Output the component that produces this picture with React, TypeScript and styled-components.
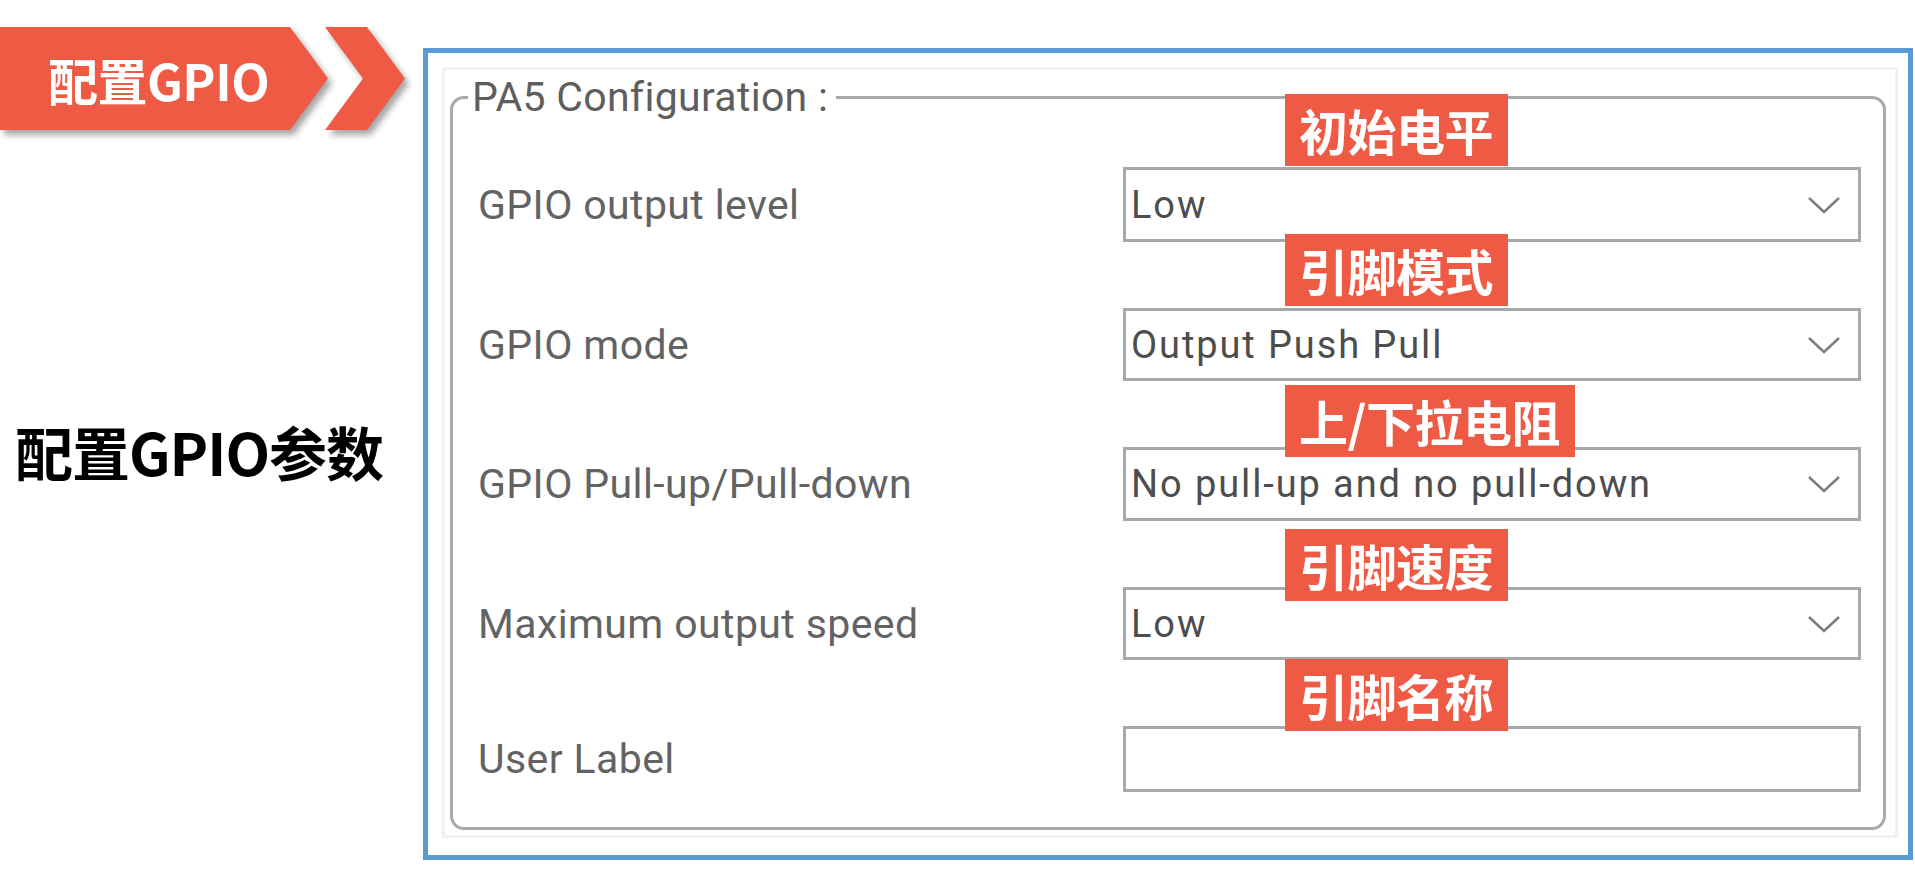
import React from "react";
import styled, { createGlobalStyle } from "styled-components";

const GlobalStyle = createGlobalStyle`
  html, body { margin: 0; padding: 0; background: #ffffff; }
  body { width: 1915px; height: 885px; overflow: hidden; }
`;

const CJK = `"Noto Sans CJK SC", "Noto Sans", sans-serif`;
const UI = `Roboto, "Liberation Sans", sans-serif`;
const RED = "#ee5a44";

const Page = styled.div`
  display: flex;
  width: 1915px;
  height: 885px;
`;

const Side = styled.div`
  width: 423px;
  flex: none;
  display: flex;
  flex-direction: column;
`;

const BannerWrap = styled.div`
  margin-top: 27px;
  height: 103px;
  display: flex;
  filter: drop-shadow(4px 5px 3px rgba(0, 0, 0, 0.35));
`;

const BannerBody = styled.div`
  width: 328px;
  height: 100%;
  box-sizing: border-box;
  padding-left: 48px;
  background: ${RED};
  clip-path: polygon(0 0, 290px 0, 328px 50%, 290px 100%, 0 100%);
  display: flex;
  align-items: center;
  color: #ffffff;
  font-family: ${CJK};
  font-weight: 700;
  font-size: 50px;
  letter-spacing: -0.5px;
`;

const Chevron = styled.div`
  width: 80px;
  height: 100%;
  margin-left: -3px;
  background: ${RED};
  clip-path: polygon(0 0, 42px 0, 80px 50%, 42px 100%, 0 100%, 38px 50%);
`;

const Title = styled.div`
  margin-top: 292px;
  padding-left: 15px;
  font-family: ${CJK};
  font-weight: 700;
  font-size: 58px;
  line-height: 1;
  color: #000000;
  letter-spacing: -1px;
`;

const Frame = styled.div`
  margin-top: 48px;
  width: 1490px;
  height: 812px;
  box-sizing: border-box;
  border: 5px solid #5b9bd5;
  padding: 14px 10px 17px 14px;
`;

const Panel = styled.div`
  height: 100%;
  box-sizing: border-box;
  border: 3px solid #f0f1f2;
  padding: 3px 9px 5px 5px;
`;

const FieldSet = styled.fieldset`
  margin: 0;
  height: 100%;
  box-sizing: border-box;
  border: 3px solid #a6aaad;
  border-radius: 14px;
  padding: 0 22px 0 25px;
  display: flex;
  flex-direction: column;
`;

const Legend = styled.legend`
  margin-left: -10px;
  padding: 0 8px 0 4px;
  font-family: ${UI};
  font-size: 41px;
  line-height: 48px;
  color: #5e5e5e;
  letter-spacing: 0.3px;
`;

const Row = styled.div<{ $first?: boolean }>`
  display: grid;
  grid-template-columns: 1fr 738px;
  align-items: center;
  margin-top: ${(p) => (p.$first ? "46px" : "66px")};
`;

const Label = styled.div`
  font-family: ${UI};
  font-size: 41px;
  letter-spacing: 0.4px;
  color: #636363;
  white-space: nowrap;
`;

const Control = styled.div<{ $h: number }>`
  position: relative;
  height: ${(p) => p.$h}px;
  box-sizing: border-box;
  border: 3px solid #a4a9ac;
  background: #ffffff;
  display: flex;
  align-items: center;
  padding-left: 5px;
  font-family: ${UI};
  font-size: 38px;
  letter-spacing: 1.9px;
  color: #4d4d4d;
  white-space: nowrap;
`;

const Caret = styled.svg`
  position: absolute;
  right: 17px;
  top: 50%;
  margin-top: -9px;
`;

const Badge = styled.div<{ $top: number }>`
  position: absolute;
  left: 159px;
  top: ${(p) => p.$top}px;
  height: 72px;
  padding: 0 15px 0 14px;
  background: ${RED};
  color: #ffffff;
  font-family: ${CJK};
  font-weight: 700;
  font-size: 49px;
  line-height: 72px;
  letter-spacing: -0.5px;
  z-index: 2;
`;

type RowData = {
  label: string;
  value: string;
  select: boolean;
  badge: string;
  badgeTop: number;
  h: number;
};

const rows: RowData[] = [
  { label: "GPIO output level", value: "Low", select: true, badge: "初始电平", badgeTop: -76, h: 75 },
  { label: "GPIO mode", value: "Output Push Pull", select: true, badge: "引脚模式", badgeTop: -77, h: 73 },
  { label: "GPIO Pull-up/Pull-down", value: "No pull-up and no pull-down", select: true, badge: "上/下拉电阻", badgeTop: -65, h: 74 },
  { label: "Maximum output speed", value: "Low", select: true, badge: "引脚速度", badgeTop: -61, h: 73 },
  { label: "User Label", value: "", select: false, badge: "引脚名称", badgeTop: -70, h: 66 },
];

export default function App() {
  return (
    <>
      <GlobalStyle />
      <Page>
        <Side>
          <BannerWrap>
            <BannerBody>配置GPIO</BannerBody>
            <Chevron />
          </BannerWrap>
          <Title>配置GPIO参数</Title>
        </Side>
        <Frame>
          <Panel>
            <FieldSet>
              <Legend>PA5 Configuration :</Legend>
              {rows.map((r, i) => (
                <Row key={r.label} $first={i === 0}>
                  <Label>{r.label}</Label>
                  <Control $h={r.h}>
                    {r.value}
                    {r.select && (
                      <Caret width="34" height="18" viewBox="0 0 34 18">
                        <polyline
                          points="2,2 17,16 32,2"
                          fill="none"
                          stroke="#7d7d7d"
                          strokeWidth="2.5"
                        />
                      </Caret>
                    )}
                    <Badge $top={r.badgeTop}>{r.badge}</Badge>
                  </Control>
                </Row>
              ))}
            </FieldSet>
          </Panel>
        </Frame>
      </Page>
    </>
  );
}
